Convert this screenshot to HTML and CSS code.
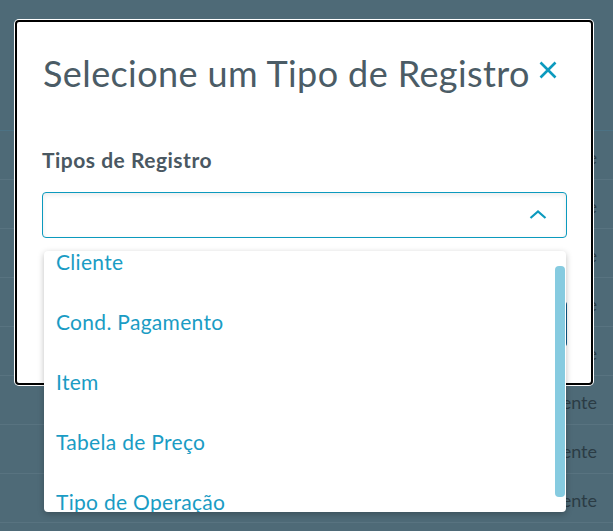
FILE: index.html
```html
<!DOCTYPE html>
<html lang="pt-BR">
<head>
  <meta charset="UTF-8">
  <meta name="viewport" content="width=device-width, initial-scale=1.0">
  <title>Selecione um Tipo de Registro</title>
  <link rel="stylesheet" href="styles.css">
</head>
<body>
  <!-- Table behind the overlay -->
  <div class="table">
    <div class="table-head"></div>
    <div class="table-row"><span class="status">Pendente</span></div>
    <div class="table-row"><span class="status">Pendente</span></div>
    <div class="table-row"><span class="status">Pendente</span></div>
    <div class="table-row"><span class="status">Pendente</span></div>
    <div class="table-row"><span class="status">Pendente</span></div>
    <div class="table-row"><span class="status">Pendente</span></div>
    <div class="table-row"><span class="status">Pendente</span></div>
    <div class="table-row"><span class="status">Pendente</span></div>
  </div>

  <!-- Modal -->
  <div class="modal">
    <div class="modal-header">
      <h1 class="modal-title">Selecione um Tipo de Registro</h1>
      <button class="modal-close" aria-label="Fechar">
        <svg viewBox="0 0 20 20" width="20" height="20">
          <path d="M2.5 2.5 L17.5 17.5 M17.5 2.5 L2.5 17.5" stroke="#0c9abe" stroke-width="2.6" fill="none"/>
        </svg>
      </button>
    </div>

    <div class="modal-body">
      <label class="field-label">Tipos de Registro</label>
      <div class="combo">
        <div class="combo-input">
          <svg class="combo-arrow" viewBox="0 0 18 9" width="18" height="9">
            <path d="M1.5 8 L9 1.5 L16.5 8" stroke="#0c9abe" stroke-width="2.2" fill="none"/>
          </svg>
        </div>

        <div class="combo-list">
          <ul>
            <li>Cliente</li>
            <li>Cond. Pagamento</li>
            <li>Item</li>
            <li>Tabela de Preço</li>
            <li>Tipo de Operação</li>
          </ul>
          <div class="scroll-thumb"></div>
        </div>
      </div>
    </div>

    <div class="modal-footer">
      <button class="btn-confirm">Confirmar</button>
    </div>
  </div>
</body>
</html>
```

FILE: styles.css
```css
body {
  margin: 0;
  padding: 0;
  background-color: #4e6a77;
  font-family: Lato, "Open Sans", sans-serif;
  overflow: hidden;
  height: 531px;
}

/* Background table */
.table-head {
  height: 130px;
  border-bottom: 1px solid #4c7284;
}
.table-row {
  height: 48px;
  border-bottom: 1px solid #587380;
  display: flex;
  align-items: center;
  justify-content: flex-end;
  padding-right: 16px;
}
.status {
  color: #2b3c45;
  font-size: 18px;
  padding-top: 4px;
}

/* Modal */
.modal {
  position: absolute;
  left: 15px;
  top: 20px;
  width: 574px;
  height: 361px;
  background: #fff;
  border: 2px solid #000;
  border-radius: 4px;
  box-shadow: 0 0 0 1px #fff;
  display: flex;
  flex-direction: column;
}
.modal-header {
  display: flex;
  align-items: center;
  padding: 31px 24px 0 26px;
}
.modal-title {
  margin: 0;
  font-size: 36px;
  font-weight: 400;
  letter-spacing: 0.4px;
  color: #4b5c66;
  line-height: 40px;
}
.modal-close {
  margin-left: 8px;
  padding: 0;
  border: none;
  background: none;
  display: flex;
  margin-top: -6px;
}
.modal-body {
  padding: 55px 24px 0 25px;
}
.field-label {
  display: block;
  font-size: 21px;
  font-weight: 700;
  letter-spacing: 0.5px;
  color: #4a5862;
  line-height: 24px;
}
.combo {
  position: relative;
  margin-top: 20px;
}
.combo-input {
  height: 44px;
  border: 1px solid #0c9abe;
  border-radius: 4px;
  box-shadow: inset 0 2px 5px rgba(0, 0, 0, 0.08);
  display: flex;
  align-items: center;
  justify-content: flex-end;
  padding-right: 19px;
}
.combo-arrow {
  margin-top: -2px;
}

/* Dropdown */
.combo-list {
  position: absolute;
  left: 2px;
  right: 1px;
  top: 59px;
  height: 261px;
  background: #fff;
  border-radius: 4px;
  box-shadow: 0 2px 6px rgba(0, 0, 0, 0.25);
  overflow: hidden;
  z-index: 2;
}
.combo-list ul {
  list-style: none;
  margin: -20px 0 0 0;
  padding: 0;
}
.combo-list li {
  height: 60px;
  display: flex;
  align-items: center;
  padding-left: 12px;
  font-size: 21px;
  letter-spacing: 0.3px;
  color: #1a9cc4;
}
.scroll-thumb {
  position: absolute;
  right: 1px;
  top: 15px;
  width: 10px;
  height: 231px;
  background: #86cbe0;
  border-radius: 4px;
}

.modal-footer {
  margin-top: auto;
  display: flex;
  justify-content: flex-end;
  padding: 0 24px 36px 0;
}
.btn-confirm {
  height: 46px;
  padding: 0 30px;
  border: none;
  border-radius: 4px;
  background: #0b5a88;
  color: #fff;
  font-family: Lato, sans-serif;
  font-size: 16px;
}
```
